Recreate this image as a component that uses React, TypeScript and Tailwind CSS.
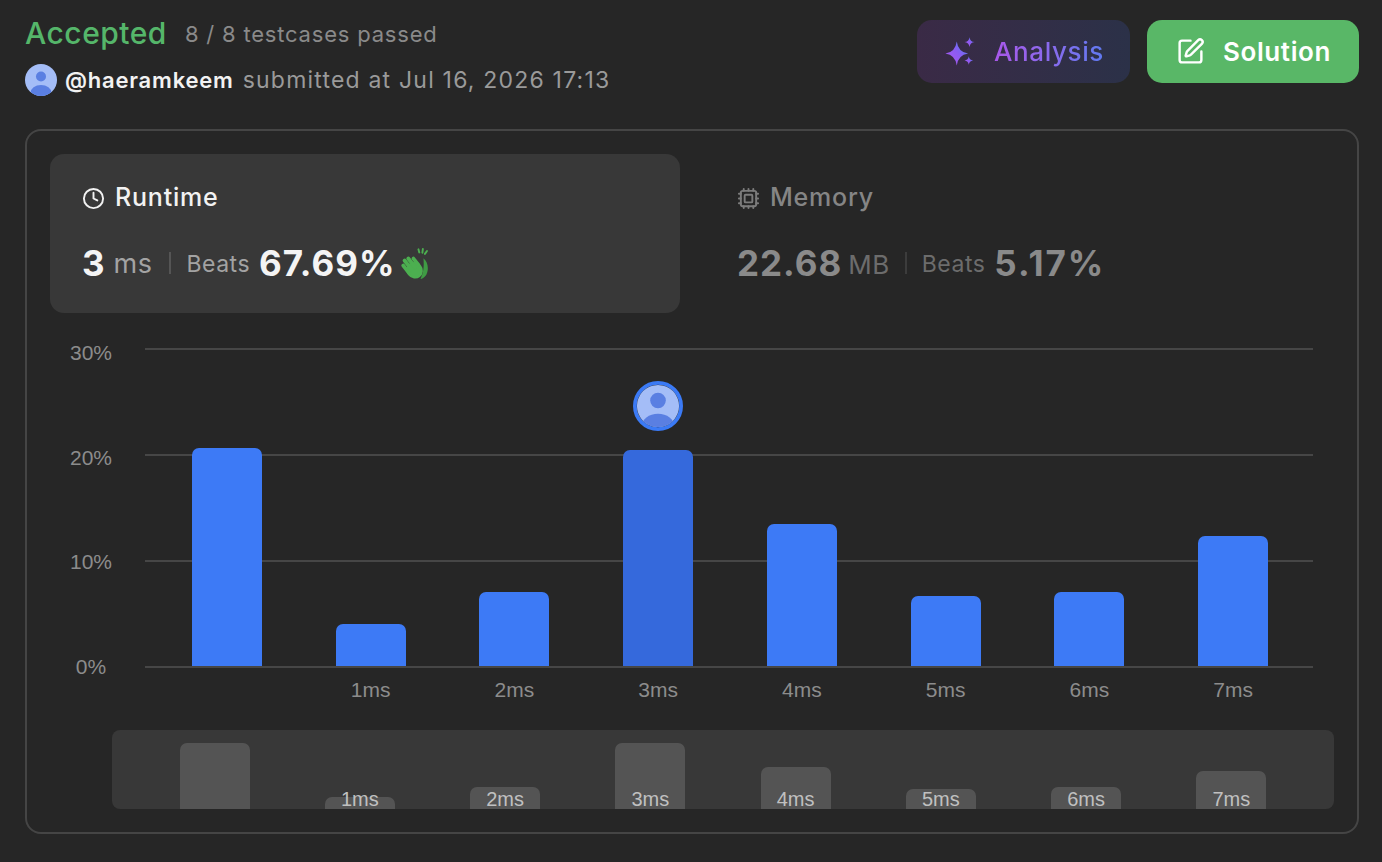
import { Clock, Cpu, SquarePen } from 'lucide-react'

const bars = [
  { label: '', h: 218, mini: 66 },
  { label: '1ms', h: 42, mini: 12 },
  { label: '2ms', h: 74, mini: 22 },
  { label: '3ms', h: 216, mini: 66, me: true },
  { label: '4ms', h: 142, mini: 42 },
  { label: '5ms', h: 70, mini: 20 },
  { label: '6ms', h: 74, mini: 22 },
  { label: '7ms', h: 130, mini: 38 },
]

function Avatar({ size, ring }: { size: number; ring?: boolean }) {
  const id = ring ? 'av-ring' : 'av-small'
  return (
    <svg width={size} height={size} viewBox="0 0 32 32">
      <defs>
        <clipPath id={id}>
          <circle cx="16" cy="16" r={ring ? 13.5 : 16} />
        </clipPath>
      </defs>
      {ring && <circle cx="16" cy="16" r="14.8" fill="none" stroke="#3b7af5" strokeWidth="2.4" />}
      <circle cx="16" cy="16" r={ring ? 13.5 : 16} fill="#a4bdf7" />
      <g clipPath={`url(#${id})`} fill="#5a7fe2">
        <circle cx="16" cy="12.5" r="5" />
        <ellipse cx="16" cy="29" rx="10.5" ry="8" />
      </g>
    </svg>
  )
}

function Sparkles() {
  return (
    <svg width="34" height="34" viewBox="0 0 24 24">
      <defs>
        <linearGradient id="spark" x1="0" y1="1" x2="1" y2="0">
          <stop offset="0%" stopColor="#b056f0" />
          <stop offset="55%" stopColor="#8a5cf2" />
          <stop offset="100%" stopColor="#3f8cf6" />
        </linearGradient>
      </defs>
      <g fill="url(#spark)">
        <path d="M9 4.5 Q10 12 17 13 Q10 14 9 21.5 Q8 14 1 13 Q8 12 9 4.5Z" />
        <path d="M18 1.5 Q18.4 4.6 21.5 5 Q18.4 5.4 18 8.5 Q17.6 5.4 14.5 5 Q17.6 4.6 18 1.5Z" />
        <path d="M17.5 15 Q17.9 17.6 20.5 18 Q17.9 18.4 17.5 21 Q17.1 18.4 14.5 18 Q17.1 17.6 17.5 15Z" />
      </g>
    </svg>
  )
}

function Clap() {
  return (
    <svg width="31" height="31" viewBox="3 1.5 19 21">
      <path d="M17.2 8.5 C19.8 10.5 20.8 14.5 19.8 18 C19.1 20.6 17.4 22.2 15.2 22.6 L16.3 19.6 C17.4 16.4 17.6 12.6 17.2 8.5Z" fill="#3f9b44" />
      <g transform="rotate(-38 10 15)" fill="#4caf50">
        <ellipse cx="10" cy="17" rx="5.4" ry="5.8" />
        <rect x="4.6" y="8.5" width="2.6" height="9" rx="1.3" />
        <rect x="7.4" y="6.3" width="2.6" height="10" rx="1.3" />
        <rect x="10.2" y="6.8" width="2.6" height="10" rx="1.3" />
        <rect x="13" y="9" width="2.5" height="8" rx="1.25" />
      </g>
      <g stroke="#4caf50" strokeWidth="1.3" strokeLinecap="round">
        <path d="M13.8 2.4 L14.4 4.5" />
        <path d="M16.8 2.2 L16.5 4.7" />
        <path d="M19.6 3.5 L18.2 5.5" />
      </g>
    </svg>
  )
}

export default function App() {
  return (
    <div className="min-h-screen bg-[#262626] pl-[25px] pr-[23px] pt-[15px] font-['Inter',sans-serif]">
      {/* header */}
      <div className="flex justify-between">
        <div className="flex flex-col">
          <div className="flex h-[36px] items-center gap-[18px]">
            <span className="text-[30px] font-medium tracking-[0.5px] text-[#55b66a]">Accepted</span>
            <span className="pt-[3px] text-[22px] tracking-[0.8px] text-[#8a8a8a]">8 / 8 testcases passed</span>
          </div>
          <div className="mt-[13px] flex h-[32px] items-center">
            <Avatar size={32} />
            <span className="ml-[8px] text-[22px] font-semibold tracking-[0.8px] text-[#f2f2f2]">@haeramkeem</span>
            <span className="ml-[9px] text-[23px] tracking-[1.2px] text-[#9a9a9a]">submitted at Jul 16, 2026 17:13</span>
          </div>
        </div>
        <div className="mt-[5px] flex gap-[17px]">
          <button className="flex h-[63px] w-[213px] items-center gap-[16px] rounded-[15px] bg-gradient-to-r from-[#3a2a46] to-[#2b3148] pl-[27px]">
            <Sparkles />
            <span className="bg-gradient-to-r from-[#a957ea] to-[#5f79f0] bg-clip-text text-[26px] font-medium tracking-[0.6px] text-transparent">
              Analysis
            </span>
          </button>
          <button className="flex h-[63px] w-[212px] items-center gap-[18px] rounded-[15px] bg-[#59b767] pl-[29px]">
            <SquarePen size={29} strokeWidth={2} color="#ffffff" />
            <span className="text-[26px] font-semibold tracking-[0.6px] text-white">Solution</span>
          </button>
        </div>
      </div>

      {/* card */}
      <div className="mt-[33px] rounded-[16px] border-2 border-[#454545] px-[23px] pt-[23px] pb-[23px]">
        <div className="flex gap-[25px]">
          <div className="h-[159px] w-[630px] rounded-[14px] bg-[#383838] pl-[32px] pt-[29px]">
            <div className="flex h-[30px] items-center gap-[10px] text-[#f2f2f2]">
              <Clock size={23} strokeWidth={2} />
              <span className="text-[25px] font-medium tracking-[0.8px]">Runtime</span>
            </div>
            <div className="mt-[30px] flex h-[40px] items-center">
              <span className="text-[35px] font-bold tracking-[1px] text-[#f4f4f4]">3</span>
              <span className="ml-[8px] pt-[3px] text-[27px] tracking-[0.5px] text-[#a3a3a3]">ms</span>
              <span className="mx-[16px] h-[22px] w-[2px] bg-[#555]" />
              <span className="pt-[2px] text-[23px] tracking-[0.5px] text-[#a3a3a3]">Beats</span>
              <span className="ml-[9px] text-[35px] font-bold tracking-[1px] text-[#f4f4f4]">67.69%</span>
              <span className="ml-[6px] flex">
                <Clap />
              </span>
            </div>
          </div>
          <div className="flex-1 pl-[32px] pt-[29px]">
            <div className="flex h-[30px] items-center gap-[10px] text-[#7c7c7c]">
              <Cpu size={23} strokeWidth={2} />
              <span className="text-[25px] font-medium tracking-[0.8px] text-[#858585]">Memory</span>
            </div>
            <div className="mt-[30px] flex h-[40px] items-center">
              <span className="text-[35px] font-bold tracking-[1px] text-[#8a8a8a]">22.68</span>
              <span className="ml-[6px] pt-[3px] text-[26px] tracking-[0.5px] text-[#6c6c6c]">MB</span>
              <span className="mx-[15px] h-[22px] w-[2px] bg-[#3c3c3c]" />
              <span className="pt-[2px] text-[23px] tracking-[0.5px] text-[#6c6c6c]">Beats</span>
              <span className="ml-[9px] text-[35px] font-bold tracking-[2px] text-[#8a8a8a]">5.17%</span>
            </div>
          </div>
        </div>

        {/* chart */}
        <div className="mt-[29px] flex font-['Liberation_Sans',Arial,sans-serif]">
          <div className="ml-[14px] flex h-[336px] w-[54px] flex-col justify-between text-center text-[21px] leading-[22px] text-[#8c8c8c]">
            <span>30%</span>
            <span>20%</span>
            <span>10%</span>
            <span>0%</span>
          </div>
          <div className="ml-[27px] mr-[21px] mt-[6px] flex-1">
            <div className="relative h-[320px]">
              <div className="flex h-full flex-col justify-between">
                <div className="h-[2px] bg-[#464646]" />
                <div className="h-[2px] bg-[#464646]" />
                <div className="h-[2px] bg-[#464646]" />
                <div className="h-[2px] bg-[#464646]" />
              </div>
              <div className="absolute bottom-[2px] left-[10px] right-[8px] top-0 flex">
                {bars.map((b, i) => (
                  <div key={i} className="flex flex-1 flex-col items-center justify-end">
                    {b.me && (
                      <div className="mb-[19px] flex">
                        <Avatar size={50} ring />
                      </div>
                    )}
                    <div
                      className={`w-[70px] rounded-t-[7px] ${b.me ? 'bg-[#3569dc]' : 'bg-[#3d7af6]'}`}
                      style={{ height: b.h }}
                    />
                  </div>
                ))}
              </div>
            </div>
            <div className="ml-[10px] mr-[8px] mt-[11px] flex text-[21px] leading-[22px] text-[#8c8c8c]">
              {bars.map((b, i) => (
                <div key={i} className="flex-1 text-center">
                  {b.label}
                </div>
              ))}
            </div>
          </div>
        </div>

        {/* mini chart */}
        <div className="ml-[62px] mt-[29px] flex h-[79px] rounded-[8px] bg-[#383838] px-[30px] font-['Liberation_Sans',Arial,sans-serif]">
          {bars.map((b, i) => (
            <div key={i} className="relative flex flex-1 items-end justify-center">
              <div className="w-[70px] rounded-t-[7px] bg-[#545454]" style={{ height: b.mini }} />
              {b.label && (
                <span className="absolute bottom-0 left-1/2 -translate-x-1/2 text-[20px] leading-[20px] text-[#c0c0c0]">
                  {b.label}
                </span>
              )}
            </div>
          ))}
        </div>
      </div>
    </div>
  )
}
